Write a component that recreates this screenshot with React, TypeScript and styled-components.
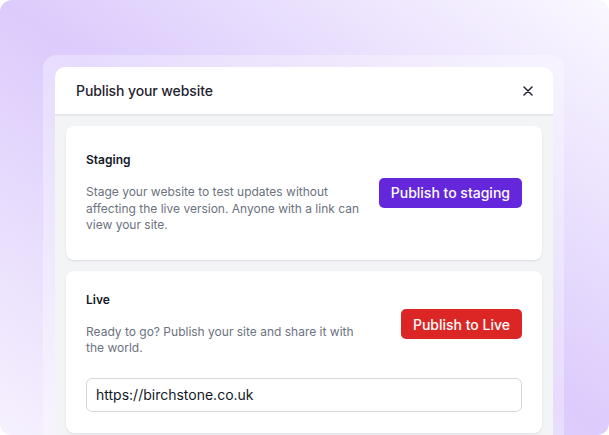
import { FC } from 'react';
import styled, { createGlobalStyle } from 'styled-components';

const Global = createGlobalStyle`
    body {
        margin: 0;
        background: #ffffff;
        font-family: 'Inter', 'Noto Sans', sans-serif;
        -webkit-font-smoothing: antialiased;
    }
`;

const Backdrop = styled.div`
    width: 609px;
    height: 435px;
    box-sizing: border-box;
    border-radius: 12px;
    overflow: hidden;
    padding: 55px 45px 0 43px;
    background: linear-gradient(to top right, #f6f1fe 0%, #dccbfc 50%, #faf8ff 100%);
`;

const Ring = styled.div`
    height: 100%;
    box-sizing: border-box;
    padding: 12px 11px 0 12px;
    border-radius: 14px 14px 0 0;
    background: rgba(255, 255, 255, 0.32);
`;

const Modal = styled.div`
    height: 100%;
    background: #ffffff;
    border-radius: 10px 10px 0 0;
    overflow: hidden;
    display: flex;
    flex-direction: column;
`;

const Header = styled.div`
    height: 47px;
    flex-shrink: 0;
    display: flex;
    align-items: center;
    justify-content: space-between;
    padding: 0 20px 0 21px;
    border-bottom: 2px solid #e6e7ea;
`;

const HeaderTitle = styled.div`
    font-size: 14px;
    font-weight: 500;
    letter-spacing: -0.1px;
    color: #1f2430;
`;

const CloseButton = styled.button`
    border: none;
    background: none;
    padding: 0;
    width: 10px;
    height: 10px;
    display: flex;
    cursor: pointer;
`;

const Body = styled.div`
    flex: 1;
    background: #f3f4f6;
    padding: 10px 11px 0;
    display: flex;
    flex-direction: column;
    gap: 11px;
`;

const Card = styled.div<{ $pad: string }>`
    background: #ffffff;
    border-radius: 8px;
    box-shadow: 0 1px 2px rgba(17, 24, 39, 0.1);
    padding: ${p => p.$pad};
`;

const Row = styled.div`
    display: flex;
    align-items: center;
    justify-content: space-between;
`;

const Info = styled.div`
    max-width: 282px;
`;

const Title = styled.div`
    font-size: 12px;
    line-height: 16px;
    font-weight: 600;
    color: #111827;
    margin-bottom: 16px;
`;

const Desc = styled.div`
    font-size: 12px;
    line-height: 16.5px;
    color: #6b7280;
`;

const Button = styled.button<{ $tone: string }>`
    height: 30px;
    padding: 0 12px;
    border: none;
    border-radius: 5px;
    background: ${p => p.$tone};
    color: #ffffff;
    font-family: 'Inter', sans-serif;
    font-size: 14px;
    font-weight: 500;
    cursor: pointer;
    flex-shrink: 0;
`;

const UrlInput = styled.input`
    display: block;
    width: 100%;
    box-sizing: border-box;
    height: 34px;
    margin-top: 21px;
    padding: 0 9px;
    border: 1px solid #d5d7dc;
    border-radius: 6px;
    font-family: 'Inter', sans-serif;
    font-size: 14px;
    color: #111827;
    outline: none;
`;

const CloseIcon: FC = () => (
    <svg width="10" height="10" viewBox="0 0 10 10">
        <path d="M1 1L9 9M9 1L1 9" stroke="#1f2430" strokeWidth="1.5" strokeLinecap="round" />
    </svg>
);

export default function App() {
    return (
        <>
            <Global />
            <Backdrop>
                <Ring>
                    <Modal>
                        <Header>
                            <HeaderTitle>Publish your website</HeaderTitle>
                            <CloseButton aria-label="Close"><CloseIcon /></CloseButton>
                        </Header>
                        <Body>
                            <Card $pad="26px 20px 26px">
                                <Row>
                                    <Info>
                                        <Title>Staging</Title>
                                        <Desc>Stage your website to test updates without affecting the live version. Anyone with a link can view your site.</Desc>
                                    </Info>
                                    <Button $tone="#6527dc">Publish to staging</Button>
                                </Row>
                            </Card>
                            <Card $pad="21px 20px 21px">
                                <Row>
                                    <Info>
                                        <Title>Live</Title>
                                        <Desc>Ready to go? Publish your site and share it with the world.</Desc>
                                    </Info>
                                    <Button $tone="#dc2626">Publish to Live</Button>
                                </Row>
                                <UrlInput defaultValue="https://birchstone.co.uk" readOnly />
                            </Card>
                        </Body>
                    </Modal>
                </Ring>
            </Backdrop>
        </>
    );
}
